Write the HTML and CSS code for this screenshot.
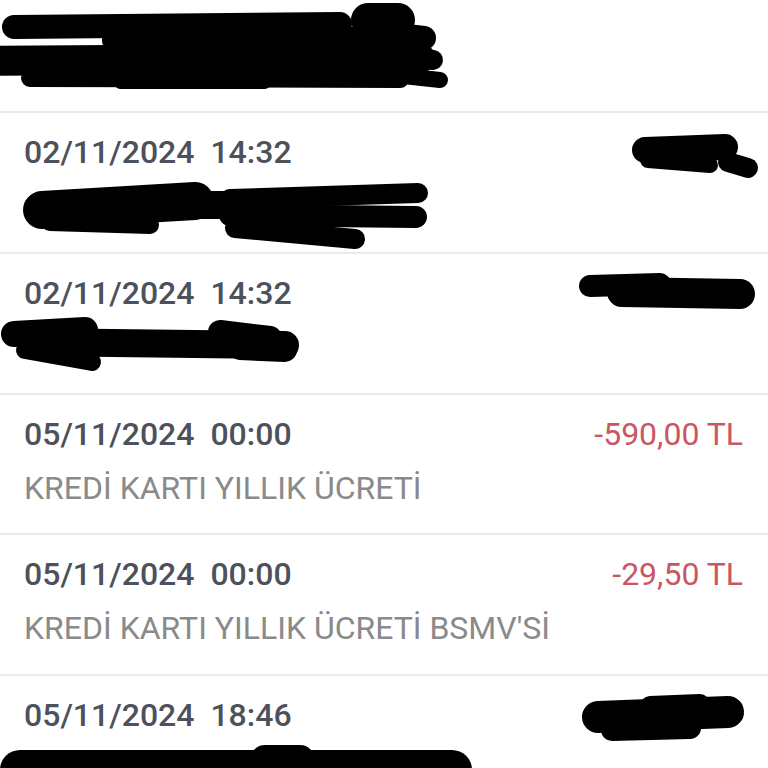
FILE: index.html
```html
<!DOCTYPE html>
<html lang="tr">
<head>
    <meta charset="UTF-8">
    <meta name="viewport" content="width=device-width, initial-scale=1.0">
    <title>Hesap Hareketleri</title>
    <link rel="stylesheet" href="styles.css">
</head>
<body>
    <div class="page">
        <div class="list">
            <div class="list-header"></div>

            <div class="tx-row">
                <div class="tx-top">
                    <span class="tx-date">02/11/2024&nbsp; 14:32</span>
                    <span class="tx-amount"></span>
                </div>
                <div class="tx-desc"></div>
            </div>

            <div class="tx-row">
                <div class="tx-top">
                    <span class="tx-date">02/11/2024&nbsp; 14:32</span>
                    <span class="tx-amount"></span>
                </div>
                <div class="tx-desc"></div>
            </div>

            <div class="tx-row">
                <div class="tx-top">
                    <span class="tx-date">05/11/2024&nbsp; 00:00</span>
                    <span class="tx-amount negative">-590,00 TL</span>
                </div>
                <div class="tx-desc">KREDİ KARTI YILLIK ÜCRETİ</div>
            </div>

            <div class="tx-row">
                <div class="tx-top">
                    <span class="tx-date">05/11/2024&nbsp; 00:00</span>
                    <span class="tx-amount negative">-29,50 TL</span>
                </div>
                <div class="tx-desc">KREDİ KARTI YILLIK ÜCRETİ BSMV'Sİ</div>
            </div>

            <div class="tx-row">
                <div class="tx-top">
                    <span class="tx-date">05/11/2024&nbsp; 18:46</span>
                    <span class="tx-amount"></span>
                </div>
                <div class="tx-desc"></div>
            </div>
        </div>

        <!-- marker scribbles drawn over the hidden fields -->
        <svg class="redact" width="768" height="768" viewBox="0 0 768 768">
            <g stroke="#000" stroke-linecap="round" stroke-linejoin="round" fill="none">
                <!-- title -->
                <path d="M14 27 L340 24" stroke-width="24"/>
                <path d="M-20 61 L420 58" stroke-width="30"/>
                <path d="M115 40 L410 40" stroke-width="26"/>
                <path d="M30 78 L400 79" stroke-width="18"/>
                <path d="M265 84 L120 84" stroke-width="10"/>
                <path d="M368 20 L398 20" stroke-width="34"/>
                <path d="M390 34 L424 38" stroke-width="24"/>
                <path d="M400 56 L433 60" stroke-width="20"/>
                <path d="M385 74 L440 80" stroke-width="16"/>

                <!-- row 1 -->
                <path d="M645 150 L725 147" stroke-width="26"/>
                <path d="M648 160 L710 165" stroke-width="16"/>
                <path d="M728 162 L748 168" stroke-width="20"/>

                <path d="M42 210 L195 201" stroke-width="38"/>
                <path d="M50 222 L150 225" stroke-width="18"/>
                <path d="M200 205 L230 205" stroke-width="28"/>
                <path d="M230 199 L418 193" stroke-width="20"/>
                <path d="M230 215 L416 217" stroke-width="22"/>
                <path d="M235 228 L355 239" stroke-width="20"/>

                <!-- row 2 -->
                <path d="M590 286 L660 284" stroke-width="22"/>
                <path d="M622 292 L740 294" stroke-width="30"/>

                <path d="M14 334 L85 330" stroke-width="26"/>
                <path d="M30 342 L285 345" stroke-width="28"/>
                <path d="M25 350 L92 362" stroke-width="18"/>
                <path d="M220 332 L270 338" stroke-width="24"/>
                <path d="M240 348 L285 350" stroke-width="24"/>

                <!-- row 5 -->
                <path d="M598 717 L728 712" stroke-width="32"/>
                <path d="M650 706 L700 704" stroke-width="20"/>
                <path d="M612 730 L690 728" stroke-width="22"/>

                <path d="M20 770 L452 770" stroke-width="40"/>
                <path d="M265 760 L300 760" stroke-width="30"/>
            </g>
        </svg>
    </div>
</body>
</html>
```

FILE: styles.css
```css
:root {
    --date-color: #4d515b;
    --desc-color: #8a8a8a;
    --negative-color: #c9575f;
    --divider: #ebebeb;
}

body {
    margin: 0;
    background: #fff;
    font-family: Roboto, "Liberation Sans", sans-serif;
    overflow: hidden;
}

.page {
    position: relative;
    width: 768px;
    height: 768px;
    overflow: hidden;
}

.list-header {
    height: 111px;
}

.tx-row {
    box-sizing: border-box;
    height: 140.75px;
    border-top: 2px solid var(--divider);
    padding: 19px 25px 0 24px;
}

.tx-top {
    display: flex;
    justify-content: space-between;
    align-items: center;
    line-height: 40px;
    height: 40px;
}

.tx-date {
    font-size: 32px;
    font-weight: 500;
    color: var(--date-color);
}

.tx-amount {
    font-size: 32px;
    color: var(--date-color);
}

.tx-amount.negative {
    color: var(--negative-color);
}

.tx-desc {
    margin-top: 14px;
    height: 40px;
    line-height: 40px;
    font-size: 32px;
    color: var(--desc-color);
    white-space: nowrap;
}

.redact {
    position: absolute;
    top: 0;
    left: 0;
    pointer-events: none;
}
```
